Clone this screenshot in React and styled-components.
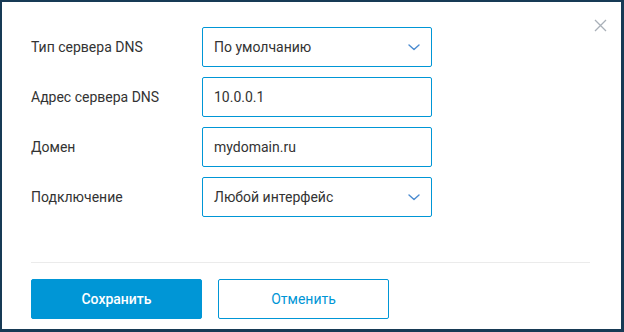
import React from 'react';
import styled, { createGlobalStyle } from 'styled-components';

const GlobalStyle = createGlobalStyle`
    html, body {
        margin: 0;
        padding: 0;
        background: #173a55;
    }
    body {
        font-family: Roboto, "Liberation Sans", sans-serif;
        width: 624px;
        height: 332px;
        overflow: hidden;
    }
`;

const fields = [
    { label: 'Тип сервера DNS', value: 'По умолчанию', select: true },
    { label: 'Адрес сервера DNS', value: '10.0.0.1' },
    { label: 'Домен', value: 'mydomain.ru' },
    { label: 'Подключение', value: 'Любой интерфейс', select: true },
];

const Chevron = () => (
    <svg width="12" height="7" viewBox="0 0 12 7" fill="none">
        <path d="M1 1l5 4.5L11 1" stroke="#4a8bd0" strokeWidth="1.4" strokeLinecap="round" strokeLinejoin="round" />
    </svg>
);

const App = () => {
    return (
        <>
            <GlobalStyle />
            <Card>
                <Close aria-label="close">
                    <svg width="13" height="13" viewBox="0 0 13 13">
                        <path d="M1 1l11 11M12 1L1 12" stroke="#a9b0b8" strokeWidth="1.3" />
                    </svg>
                </Close>
                <Form>
                    {fields.map(f => (
                        <Row key={f.label}>
                            <Label>{f.label}</Label>
                            <Field>
                                <span>{f.value}</span>
                                {f.select && <Chevron />}
                            </Field>
                        </Row>
                    ))}
                </Form>
                <Divider />
                <Actions>
                    <Button primary>Сохранить</Button>
                    <Button>Отменить</Button>
                </Actions>
            </Card>
        </>
    );
};

export default App;

const Card = styled.div`
    position: relative;
    box-sizing: border-box;
    margin: 2px 0 0 2px;
    width: 619px;
    height: 327px;
    background: #fff;
    padding: 25px 31px 10px 29px;
    display: flex;
    flex-direction: column;
`;

const Close = styled.button`
    position: absolute;
    top: 16px;
    right: 13px;
    border: none;
    background: none;
    padding: 1px;
    line-height: 0;
    cursor: pointer;
`;

const Form = styled.div`
    display: flex;
    flex-direction: column;
    gap: 10px;
`;

const Row = styled.div`
    display: flex;
    align-items: center;
`;

const Label = styled.div`
    width: 171px;
    font-size: 14px;
    color: #333;
`;

const Field = styled.div`
    box-sizing: border-box;
    width: 230px;
    height: 40px;
    border: 1px solid #0096d6;
    border-radius: 2px;
    padding: 0 11px 0 11px;
    display: flex;
    align-items: center;
    justify-content: space-between;
    font-size: 14px;
    color: #333;
`;

const Divider = styled.div`
    height: 1px;
    background: #ebebeb;
    margin-top: 45px;
`;

const Actions = styled.div`
    display: flex;
    gap: 16px;
    margin-top: 16px;
`;

const Button = styled.button`
    box-sizing: border-box;
    width: 171px;
    height: 40px;
    border-radius: 2px;
    font-family: Roboto, "Liberation Sans", sans-serif;
    font-size: 14px;
    font-weight: ${p => (p.primary ? 500 : 400)};
    cursor: pointer;
    border: 1px solid #0096d6;
    background: ${p => (p.primary ? '#0096d6' : '#fff')};
    color: ${p => (p.primary ? '#fff' : '#0096d6')};
`;
